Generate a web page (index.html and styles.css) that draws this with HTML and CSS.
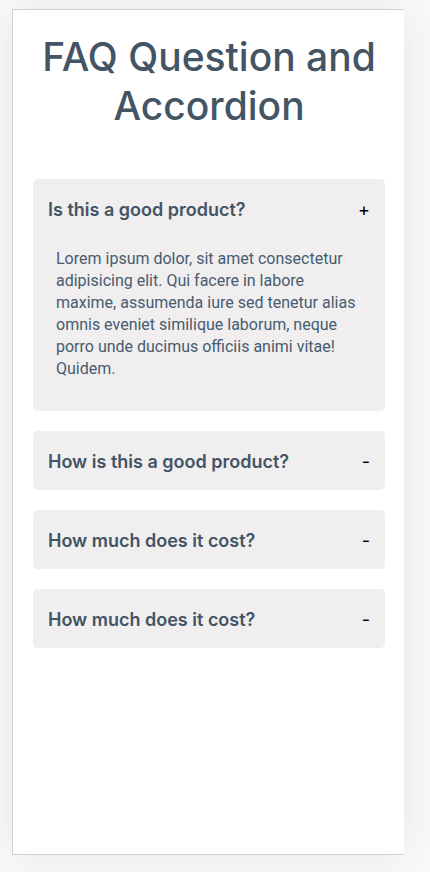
FILE: index.html
```html
<!DOCTYPE html>
<html lang="en">
<head>
  <meta charset="utf-8">
  <meta name="viewport" content="width=device-width, initial-scale=1">
  <title>FAQ Question and Accordion</title>
  <link rel="stylesheet" href="styles.css">
</head>
<body>
  <main class="panel">
    <h1 class="title">FAQ Question and Accordion</h1>
    <div class="accordion">
      <section class="item">
        <h2 class="heading"><button class="question" type="button" aria-expanded="true" aria-controls="answer-1"><span>Is this a good product?</span><span class="sign">+</span></button></h2>
        <p class="answer" id="answer-1">Lorem ipsum dolor, sit amet consectetur adipisicing elit. Qui facere in labore maxime, assumenda iure sed tenetur alias omnis eveniet similique laborum, neque porro unde ducimus officiis animi vitae! Quidem.</p>
      </section>
      <section class="item">
        <h2 class="heading"><button class="question" type="button" aria-expanded="false"><span>How is this a good product?</span><span class="sign">-</span></button></h2>
      </section>
      <section class="item">
        <h2 class="heading"><button class="question" type="button" aria-expanded="false"><span>How much does it cost?</span><span class="sign">-</span></button></h2>
      </section>
      <section class="item">
        <h2 class="heading"><button class="question" type="button" aria-expanded="false"><span>How much does it cost?</span><span class="sign">-</span></button></h2>
      </section>
    </div>
  </main>
</body>
</html>
```
FILE: styles.css
```css
* {
  box-sizing: border-box;
}

body {
  display: flex;
  min-height: 100vh;
  margin: 0;
  padding: 9px 26px 17px 12px;
  background: #f8faf9;
  color: #435465;
  font-family: Inter, "Liberation Sans", sans-serif;
}

.panel {
  flex: 1;
  padding: 22px 19px 20px 20px;
  border: 1px solid #d0d2d2;
  border-right: 0;
  background: #fff;
  box-shadow: 0 0 40px rgba(0, 0, 0, 0.08);
}

.title {
  margin: 0 0 49px;
  font-size: 39px;
  font-weight: 500;
  line-height: 49px;
  text-align: center;
}

.accordion {
  display: grid;
  gap: 20px;
}

.item {
  border-radius: 5px;
  background: #f0eeef;
}

.heading {
  margin: 0;
}

.question {
  display: flex;
  align-items: center;
  justify-content: space-between;
  width: 100%;
  padding: 19px 15px 17px;
  border: 0;
  background: none;
  color: inherit;
  font: 600 18px/23px Inter, "Liberation Sans", sans-serif;
  text-align: left;
  cursor: pointer;
}

.sign {
  color: #000;
  font-size: 18px;
  font-weight: 400;
}

.answer {
  margin: 0;
  padding: 10px 23px 31px;
  color: #475c70;
  font-family: Roboto, "Liberation Sans", sans-serif;
  font-size: 16px;
  line-height: 22px;
}
```
